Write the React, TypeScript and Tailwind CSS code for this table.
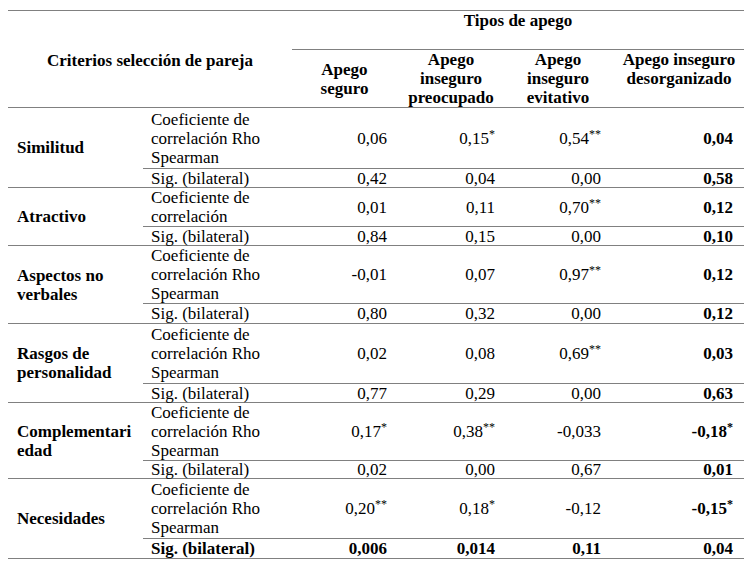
import React from "react";

type Group = {
  label: string[];
  coef: string[];
  coefH: number;
  sigH: number;
  vals: string[];
  sig: string[];
  sigBold?: boolean;
};

const groups: Group[] = [
  {
    label: ["Similitud"],
    coef: ["Coeficiente de", "correlación Rho", "Spearman"],
    coefH: 60,
    sigH: 19,
    vals: ["0,06", "0,15*", "0,54**", "0,04"],
    sig: ["0,42", "0,04", "0,00", "0,58"],
  },
  {
    label: ["Atractivo"],
    coef: ["Coeficiente de", "correlación"],
    coefH: 38,
    sigH: 19,
    vals: ["0,01", "0,11", "0,70**", "0,12"],
    sig: ["0,84", "0,15", "0,00", "0,10"],
  },
  {
    label: ["Aspectos no", "verbales"],
    coef: ["Coeficiente de", "correlación Rho", "Spearman"],
    coefH: 57,
    sigH: 20,
    vals: ["-0,01", "0,07", "0,97**", "0,12"],
    sig: ["0,80", "0,32", "0,00", "0,12"],
  },
  {
    label: ["Rasgos de", "personalidad"],
    coef: ["Coeficiente de", "correlación Rho", "Spearman"],
    coefH: 59,
    sigH: 19,
    vals: ["0,02", "0,08", "0,69**", "0,03"],
    sig: ["0,77", "0,29", "0,00", "0,63"],
  },
  {
    label: ["Complementari", "edad"],
    coef: ["Coeficiente de", "correlación Rho", "Spearman"],
    coefH: 57,
    sigH: 18,
    vals: ["0,17*", "0,38**", "-0,033", "-0,18*"],
    sig: ["0,02", "0,00", "0,67", "0,01"],
  },
  {
    label: ["Necesidades"],
    coef: ["Coeficiente de", "correlación Rho", "Spearman"],
    coefH: 59,
    sigH: 20,
    vals: ["0,20**", "0,18*", "-0,12", "-0,15*"],
    sig: ["0,006", "0,014", "0,11", "0,04"],
    sigBold: true,
  },
];

const colW = ["w-[105px]", "w-[108px]", "w-[106px]", "w-[132px]"];

function Val({ v }: { v: string }) {
  const m = v.match(/^([^*]*)(\**)$/);
  const num = m ? m[1] : v;
  const stars = m ? m[2] : "";
  return (
    <span>
      {num}
      {stars && <sup className="text-[12px]">{stars}</sup>}
    </span>
  );
}

function ValueCells({ vals, bold }: { vals: string[]; bold?: boolean }) {
  return (
    <>
      {vals.map((v, i) => (
        <div
          key={i}
          className={`${colW[i]} shrink-0 flex items-center justify-end pr-[10px] ${
            bold || i === 3 ? "font-bold" : ""
          }`}
        >
          <Val v={v} />
        </div>
      ))}
    </>
  );
}

export default function App() {
  return (
    <div className="w-[753px] h-[568px] bg-white text-black font-[family-name:'Liberation_Serif',serif] text-[17px] leading-[19px] pt-[10px] pl-[8px]">
      <div className="w-[736px] border-t border-[#808080]">
        {/* Header */}
        <div className="flex h-[97px] border-b border-[#808080]">
          <div className="w-[284px] shrink-0 flex items-center justify-center font-bold pt-[2px]">
            Criterios selección de pareja
          </div>
          <div className="flex-1 flex flex-col">
            <div className="h-[38px] flex justify-center font-bold">Tipos de apego</div>
            <div className="flex-1 flex border-t border-[#808080] font-bold text-center">
              <div className="w-[105px] shrink-0 flex items-center justify-center pt-[1px]">
                <div>
                  Apego
                  <br />
                  seguro
                </div>
              </div>
              <div className="w-[108px] shrink-0">
                Apego
                <br />
                inseguro
                <br />
                preocupado
              </div>
              <div className="w-[106px] shrink-0">
                Apego
                <br />
                inseguro
                <br />
                evitativo
              </div>
              <div className="w-[132px] shrink-0 pl-[4px]">
                Apego inseguro
                <br />
                desorganizado
              </div>
            </div>
          </div>
        </div>

        {/* Body */}
        {groups.map((g, gi) => (
          <div key={gi} className="flex border-b border-[#808080]">
            <div className="w-[135px] shrink-0 flex items-center pl-[9px] font-bold">
              <div>
                {g.label.map((l, i) => (
                  <div key={i}>{l}</div>
                ))}
              </div>
            </div>
            <div className="flex-1 flex flex-col">
              <div className="flex" style={{ height: g.coefH }}>
                <div className="w-[149px] shrink-0 flex items-center pl-[8px]">
                  <div>
                    {g.coef.map((l, i) => (
                      <div key={i}>{l}</div>
                    ))}
                  </div>
                </div>
                <ValueCells vals={g.vals} />
              </div>
              <div
                className={`flex border-t border-[#808080] ${g.sigBold ? "font-bold" : ""}`}
                style={{ height: g.sigH }}
              >
                <div className="w-[149px] shrink-0 flex items-center pl-[8px]">
                  Sig. (bilateral)
                </div>
                <ValueCells vals={g.sig} bold={g.sigBold} />
              </div>
            </div>
          </div>
        ))}
      </div>
    </div>
  );
}
